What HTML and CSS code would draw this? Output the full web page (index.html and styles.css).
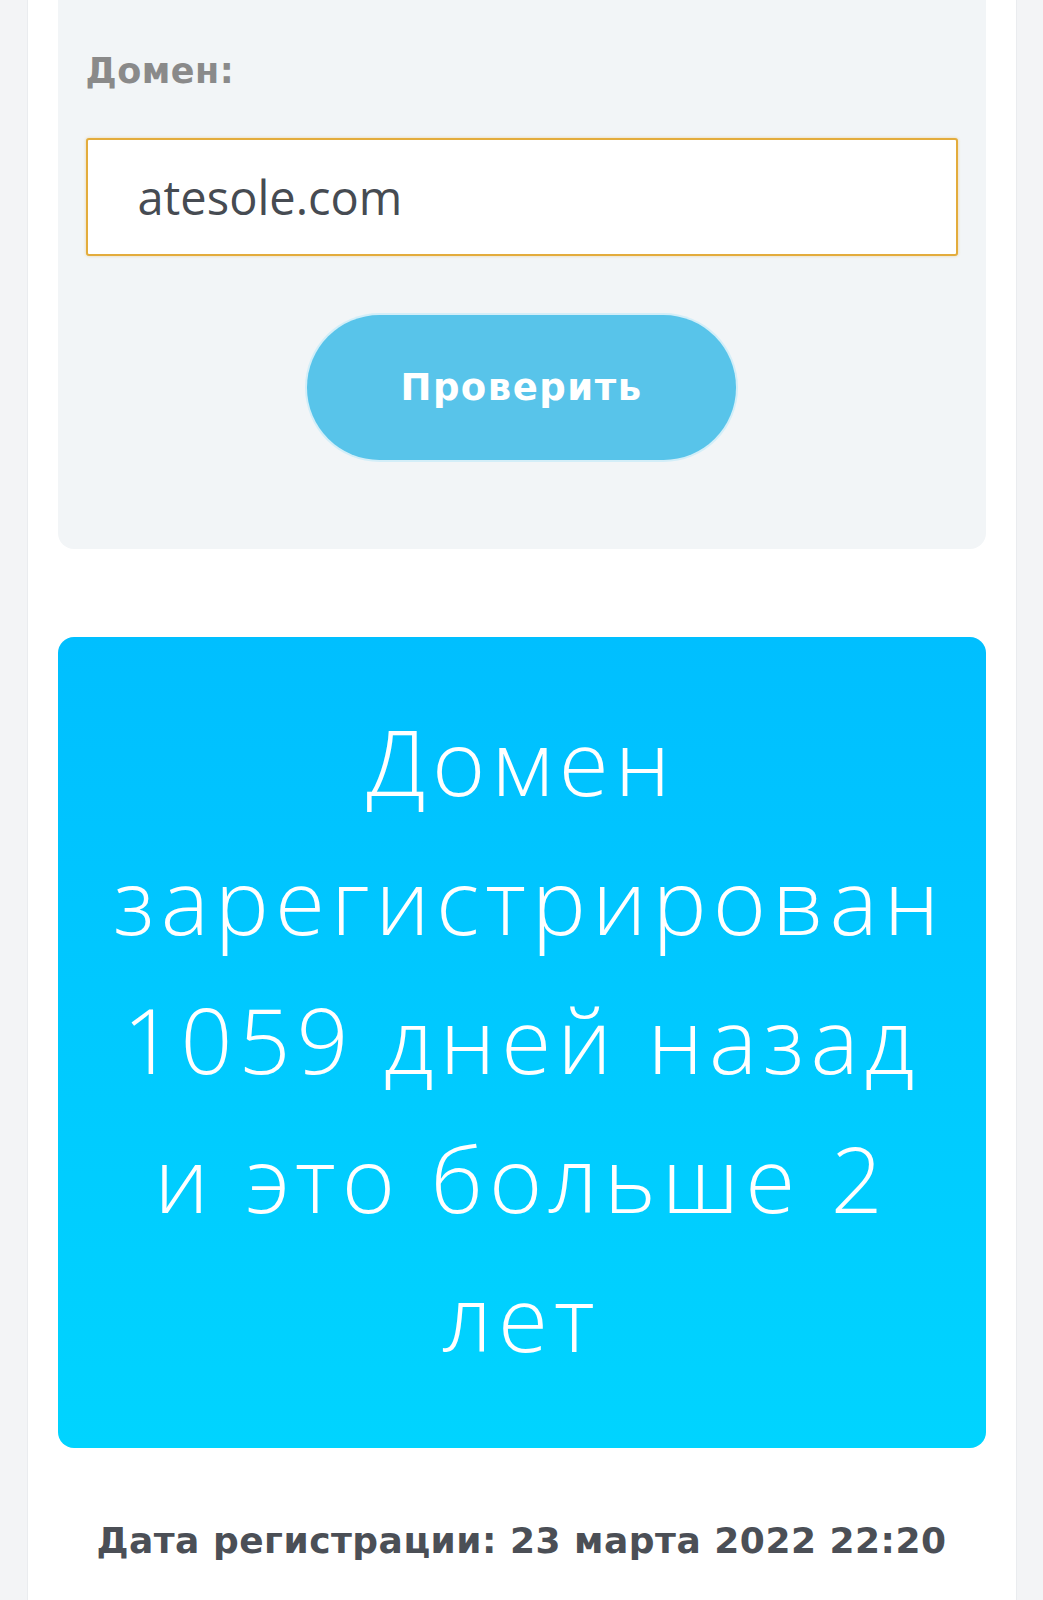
FILE: index.html
```html
<!DOCTYPE html>
<html lang="ru">
<head>
    <meta charset="UTF-8">
    <title>Проверка возраста домена</title>

    <link rel="stylesheet" href="styles.css">

</head>

<body>

<div class="page">

    <form class="check-form" action="/check-domain" method="POST">
        <label class="field-label" for="domain">Домен:</label>
        <input class="domain-input" id="domain" type="text" value="atesole.com">
        <button class="check-btn" type="button">Проверить</button>
    </form>

    <div class="result-block">
        Домен зарегистрирован 1059 дней назад и это больше 2 лет
    </div>

    <p class="reg-date">Дата регистрации: 23 марта 2022 22:20</p>

</div>

</body>
</html>
```

FILE: styles.css
```css
body {
    margin: 0;
    background: #f3f4f6;
}

.page {
    width: 990px;
    min-height: 1600px;
    margin: 0 auto;
    padding: 0 30px;
    box-sizing: border-box;
    background: #fff;
    border-left: 1px solid #eaecef;
    border-right: 1px solid #eaecef;
}

.check-form {
    display: block;
    margin: 0;
    padding: 48px 28px 89px;
    background: #f2f5f7;
    border-radius: 0 0 16px 16px;
}

.field-label {
    display: block;
    margin-bottom: 44px;
    font-family: "DejaVu Sans", sans-serif;
    font-weight: bold;
    font-size: 35px;
    line-height: 46px;
    letter-spacing: 0.5px;
    color: #8a8a8a;
}

.domain-input {
    display: block;
    width: 100%;
    height: 118px;
    box-sizing: border-box;
    padding: 0 0 0 50px;
    border: 2px solid #e3ac3c;
    border-radius: 3px;
    box-shadow: 0 0 3px rgba(227, 172, 60, 0.45);
    background: #fff;
    font-family: "Open Sans", sans-serif;
    font-size: 47px;
    color: #464b52;
    outline: none;
}

.check-btn {
    display: block;
    width: 429px;
    height: 145px;
    margin: 59px auto 0;
    border: none;
    border-radius: 73px;
    background: #58c4ea;
    box-shadow: 0 0 0 2px #d3eef8;
    font-family: "DejaVu Sans", sans-serif;
    font-weight: bold;
    font-size: 37px;
    letter-spacing: 1.5px;
    color: #fff;
}

.result-block {
    margin-top: 88px;
    padding: 55px 56px 61px;
    border-radius: 16px;
    background: linear-gradient(#00bfff, #00d4ff);
    font-family: "Open Sans", sans-serif;
    font-weight: 300;
    font-size: 91px;
    line-height: 139px;
    letter-spacing: 6px;
    text-align: center;
    color: #fff;
}

.reg-date {
    margin: 68px 0 0;
    font-family: "DejaVu Sans", sans-serif;
    font-weight: bold;
    font-size: 36px;
    line-height: 50px;
    letter-spacing: 0.5px;
    text-align: center;
    color: #4b4f56;
}
```
